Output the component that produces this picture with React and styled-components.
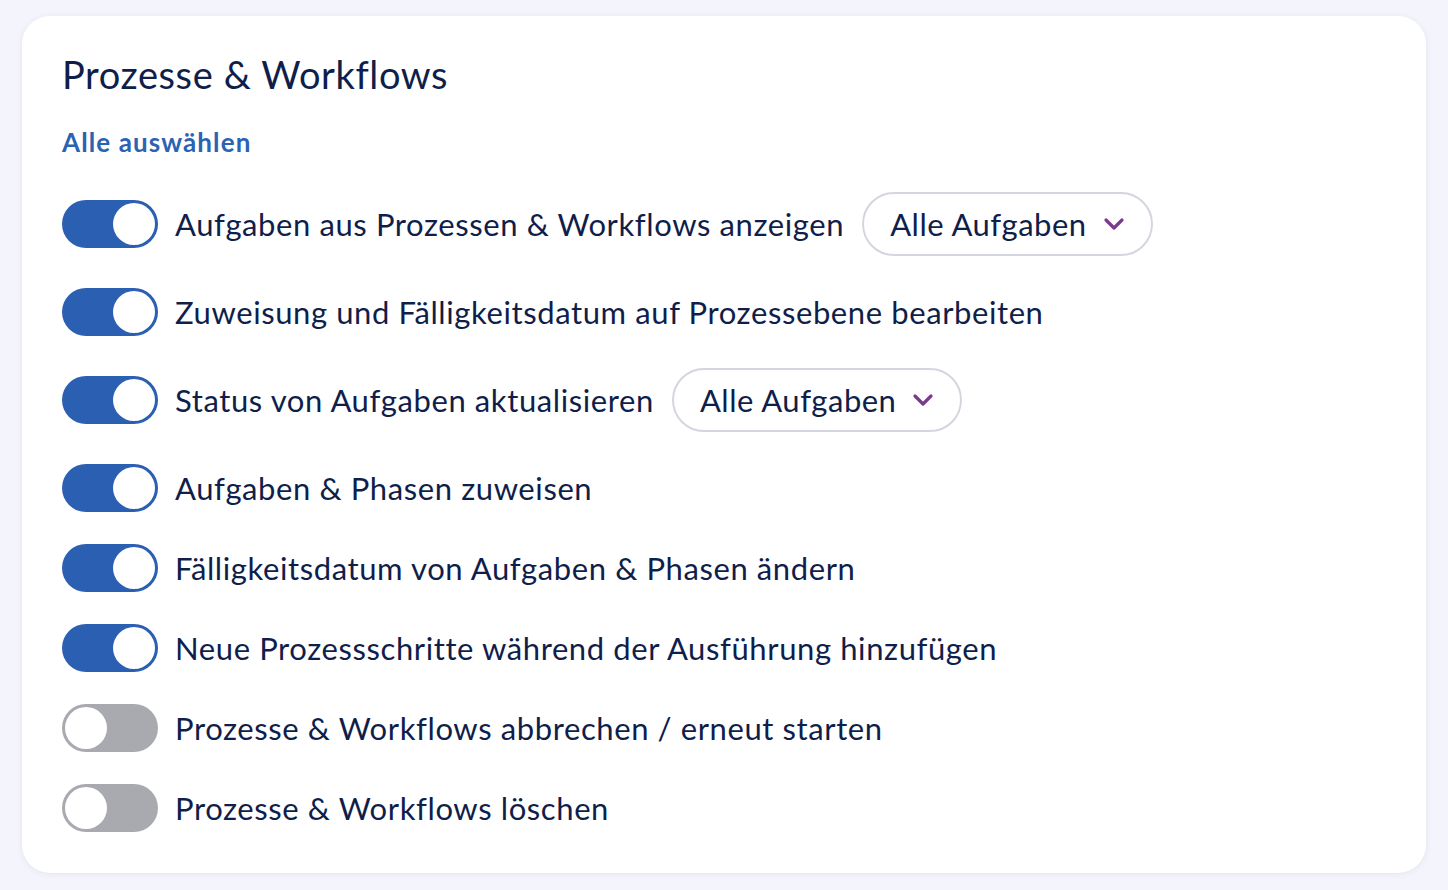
import styled, { createGlobalStyle } from "styled-components";

const GlobalStyle = createGlobalStyle`
  html, body {
    margin: 0;
    padding: 0;
    background: #f4f4fc;
    font-family: "Lato", "Open Sans", sans-serif;
  }
`;

const rows = [
  { label: "Aufgaben aus Prozessen & Workflows anzeigen", on: true, select: "Alle Aufgaben" },
  { label: "Zuweisung und Fälligkeitsdatum auf Prozessebene bearbeiten", on: true },
  { label: "Status von Aufgaben aktualisieren", on: true, select: "Alle Aufgaben" },
  { label: "Aufgaben & Phasen zuweisen", on: true },
  { label: "Fälligkeitsdatum von Aufgaben & Phasen ändern", on: true },
  { label: "Neue Prozessschritte während der Ausführung hinzufügen", on: true },
  { label: "Prozesse & Workflows abbrechen / erneut starten", on: false },
  { label: "Prozesse & Workflows löschen", on: false },
];

const Chevron = () => (
  <svg width="22" height="14" viewBox="0 0 22 14" fill="none">
    <path d="M3 3l8 8 8-8" stroke="#7a3b8c" strokeWidth="3.2" strokeLinecap="round" strokeLinejoin="round" />
  </svg>
);

export default function App() {
  return (
    <>
      <GlobalStyle />
      <Page>
        <Card>
          <Title>Prozesse & Workflows</Title>
          <SelectAll>Alle auswählen</SelectAll>
          <List>
            {rows.map((r) => (
              <Row key={r.label}>
                <Toggle $on={r.on}>
                  <Knob />
                </Toggle>
                <Label>{r.label}</Label>
                {r.select && (
                  <Select>
                    <span>{r.select}</span>
                    <Chevron />
                  </Select>
                )}
              </Row>
            ))}
          </List>
        </Card>
      </Page>
    </>
  );
}

const Page = styled.div`
  padding: 16px 22px 18px 22px;
`;

const Card = styled.div`
  background: #fff;
  border-radius: 28px;
  box-shadow: 0 1px 6px rgba(40, 50, 120, 0.08);
  padding: 35px 40px 41px 40px;
  display: flex;
  flex-direction: column;
`;

const Title = styled.h1`
  margin: 0;
  font-size: 38px;
  font-weight: 400;
  letter-spacing: 0.6px;
  color: #0f1e4a;
  line-height: 46px;
`;

const SelectAll = styled.a`
  margin-top: 29px;
  font-size: 26px;
  font-weight: 700;
  letter-spacing: 1.1px;
  color: #2b62b3;
  line-height: 32px;
`;

const List = styled.div`
  margin-top: 34px;
  display: flex;
  flex-direction: column;
  gap: 32px;
`;

const Row = styled.div`
  display: flex;
  align-items: center;
  min-height: 48px;
`;

const Toggle = styled.div`
  flex: none;
  width: 96px;
  height: 48px;
  border-radius: 24px;
  background: ${(p) => (p.$on ? "#2a5fb1" : "#a9aab0")};
  display: flex;
  align-items: center;
  justify-content: ${(p) => (p.$on ? "flex-end" : "flex-start")};
  padding: 0 3px;
  box-sizing: border-box;
`;

const Knob = styled.div`
  width: 42px;
  height: 42px;
  border-radius: 50%;
  background: #fff;
`;

const Label = styled.span`
  margin-left: 17px;
  font-size: 31px;
  letter-spacing: 0.6px;
  color: #0f1e4a;
  white-space: nowrap;
`;

const Select = styled.div`
  margin-left: 18px;
  height: 64px;
  box-sizing: border-box;
  border: 2px solid #d3d6e0;
  border-radius: 32px;
  padding: 0 26px 0 26px;
  display: flex;
  align-items: center;
  gap: 16px;
  font-size: 31px;
  letter-spacing: 0.5px;
  color: #0f1e4a;
`;
